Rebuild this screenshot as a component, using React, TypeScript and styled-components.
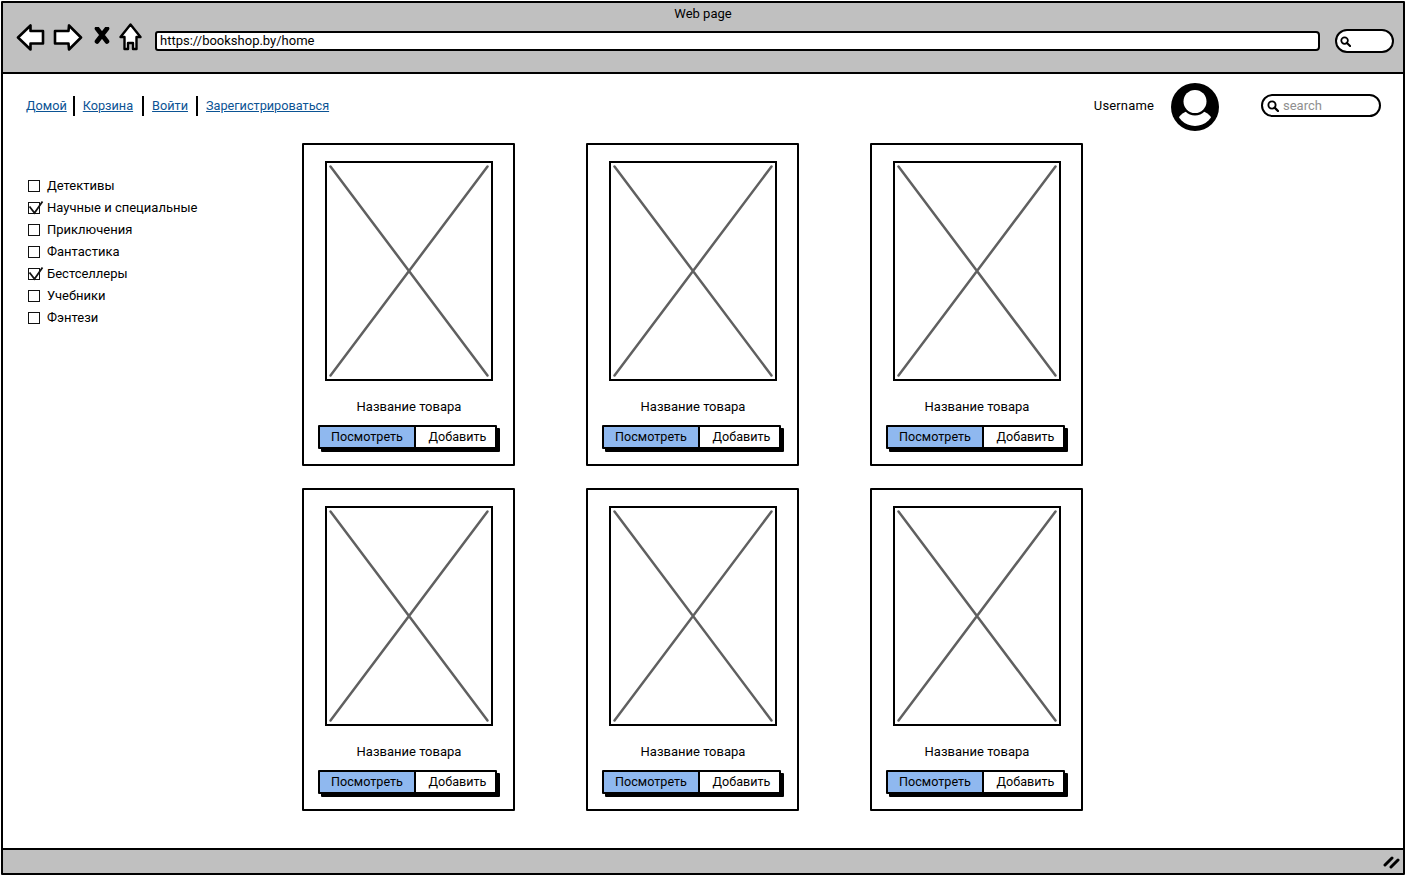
import React from "react";
import styled, { createGlobalStyle } from "styled-components";

const Global = createGlobalStyle`
  html, body { margin: 0; padding: 0; background: #fff; }
  body { font-family: "Roboto", "Noto Sans", sans-serif; font-size: 13px; color: #000; }
`;

const Page = styled.div`
  width: 1404px; height: 874px; margin: 1px 0 0 1px;
  border: 2px solid #000; box-sizing: border-box;
  display: flex; flex-direction: column; background: #fff;
  border-radius: 1px;
`;
const TitleBar = styled.header`
  height: 71px; flex: none; box-sizing: border-box;
  background: #c0c0c0; border-bottom: 2px solid #000;
  display: flex; flex-direction: column;
`;
const WindowTitle = styled.div`
  height: 22px; line-height: 22px; text-align: center; font-size: 13px;
`;
const Toolbar = styled.div`
  display: flex; align-items: center; height: 30px; padding-left: 13px;
`;
const NavIcon = styled.svg<{ $gap: number }>`
  flex: none; margin: 0 ${p => p.$gap}px 6px 0; display: block;
`;
const Address = styled.div`
  flex: none; width: 1165px; height: 20px; box-sizing: border-box; margin-top: 2px;
  background: #fff; border: 2px solid #000; border-radius: 3px 4px 4px 3px;
  padding-left: 3px; font-size: 13px; line-height: 16px; margin-right: 15px;
`;
const MiniSearch = styled.div`
  flex: none; width: 59px; height: 24px; box-sizing: border-box; margin-top: 2px;
  background: #fff; border: 2px solid #000; border-radius: 12px;
  display: flex; align-items: center; padding-left: 3px;
`;
const Content = styled.main`
  flex: 1; min-height: 0; display: flex; flex-direction: column;
`;
const TopNav = styled.nav`
  height: 69px; flex: none; box-sizing: border-box;
  display: flex; align-items: center; padding: 0 22px 6px 23px;
`;
const Links = styled.div`
  display: flex; align-items: center; margin-right: auto;
`;
const LinkItem = styled.a`
  color: #0b5394; text-decoration: underline; font-size: 12.7px; line-height: 20px;
`;
const Sep = styled.span<{ $before: number }>`
  width: 2px; height: 20px; background: #000; flex: none;
  margin: 0 8px 0 ${p => p.$before}px;
`;
const UserName = styled.span`
  font-size: 13px; margin-right: 17px; letter-spacing: 0.15px;
`;
const Avatar = styled.svg`
  display: block; flex: none; margin-right: 42px; margin-top: 2px;
`;
const SearchBox = styled.div`
  width: 120px; height: 23px; box-sizing: border-box;
  border: 2px solid #000; border-radius: 12px;
  display: flex; align-items: center; gap: 4px; padding-left: 4px;
  color: #8f8f8f; font-size: 13px; line-height: 18px;
`;
const Columns = styled.div`
  display: flex; flex: 1; min-height: 0;
`;
const Sidebar = styled.aside`
  width: 299px; flex: none; box-sizing: border-box; padding: 32px 0 0 25px;
`;
const CheckRow = styled.div`
  height: 22px; display: flex; align-items: center; gap: 7px; font-size: 13px;
`;
const CheckLabel = styled.span`
  margin-top: -2px;
`;
const Box = styled.span`
  width: 12px; height: 12px; flex: none; box-sizing: border-box;
  border: 1.5px solid #111; position: relative; display: block;
`;
const Tick = styled.svg`
  position: absolute; left: -1px; top: -4px; overflow: visible;
`;
const Grid = styled.section`
  display: grid; grid-template-columns: repeat(3, 213px);
  grid-auto-rows: 323px; column-gap: 71px; row-gap: 22px;
`;
const Card = styled.article`
  box-sizing: border-box; border: 2px solid #000; border-radius: 1px;
  display: flex; flex-direction: column; align-items: center; padding: 16px 0 0 1px;
`;
const Placeholder = styled.div`
  width: 168px; height: 220px; box-sizing: border-box; border: 2px solid #000; flex: none;
`;
const Cross = styled.svg`
  display: block; width: 100%; height: 100%;
`;
const ItemTitle = styled.div`
  margin-top: 16px; height: 20px; line-height: 20px; font-size: 13px;
`;
const BtnGroup = styled.div`
  margin: 8px 3px 0 0; display: flex; width: 179px; height: 24px;
  box-sizing: border-box; border: 2px solid #000; border-radius: 1px;
  box-shadow: 3px 3px 0 #000; background: #fff;
`;
const Btn = styled.div<{ $active?: boolean }>`
  display: flex; align-items: center; justify-content: center;
  font-size: 12.6px; line-height: 20px; box-sizing: border-box;
  width: ${p => (p.$active ? "96px" : "auto")};
  flex: ${p => (p.$active ? "none" : "1")};
  background: ${p => (p.$active ? "#8fb8ef" : "#fff")};
  border-right: ${p => (p.$active ? "2px solid #000" : "none")};
  padding-left: ${p => (p.$active ? "0" : "4px")};
`;
const Footer = styled.footer`
  height: 25px; flex: none; box-sizing: border-box; margin-top: auto;
  background: #c0c0c0; border-top: 2px solid #000;
  display: flex; align-items: center; justify-content: flex-end; padding-right: 2px;
`;

const Mag = ({ s = 12 }: { s?: number }) => (
  <svg width={s} height={s} viewBox="0 0 12 12" style={{ flex: "none", display: "block" }}>
    <circle cx="5" cy="5" r="3.6" fill="none" stroke="#000" strokeWidth="1.9" />
    <path d="M7.600 7.600 L11 11" stroke="#000" strokeWidth="2.300" strokeLinecap="round" />
  </svg>
);

const Check = ({ label, on }: { label: string; on?: boolean }) => (
  <CheckRow>
    <Box>
      {on && (
        <Tick width="16" height="16" viewBox="0 0 16 16">
          <path d="M1.500 7.500 L6.500 14 L14.500 2.500" fill="none" stroke="#111" strokeWidth="1.800" />
        </Tick>
      )}
    </Box>
    <CheckLabel>{label}</CheckLabel>
  </CheckRow>
);

const Product = () => (
  <Card>
    <Placeholder>
      <Cross viewBox="0 0 164 216">
        <path d="M3.500 3.500 L160.500 212.500 M160.500 3.500 L3.500 212.500" stroke="#606060" strokeWidth="2.500" strokeLinecap="round" />
      </Cross>
    </Placeholder>
    <ItemTitle>Название товара</ItemTitle>
    <BtnGroup>
      <Btn $active>Посмотреть</Btn>
      <Btn>Добавить</Btn>
    </BtnGroup>
  </Card>
);

const cats: [string, boolean][] = [
  ["Детективы", false], ["Научные и специальные", true], ["Приключения", false],
  ["Фантастика", false], ["Бестселлеры", true], ["Учебники", false], ["Фэнтези", false],
];

export default function App() {
  return (
    <Page>
      <Global />
      <TitleBar>
        <WindowTitle>Web page</WindowTitle>
        <Toolbar>
          <NavIcon $gap={8} width="29" height="27" viewBox="0 0 29 27">
            <path d="M2 13.500 L14.500 1.500 L14.500 7 L27 7 L27 19.500 L14.500 19.500 L14.500 25.500 Z" fill="#fff" stroke="#000" strokeWidth="2.600" strokeLinejoin="round" />
          </NavIcon>
          <NavIcon $gap={11} width="30" height="27" viewBox="0 0 30 27">
            <path d="M28 13.500 L16 1.500 L15.500 7 L2 7 L2 19.500 L15.500 19.500 L16 25.500 Z" fill="#fff" stroke="#000" strokeWidth="2.600" strokeLinejoin="round" />
          </NavIcon>
          <NavIcon $gap={9} width="16" height="20" viewBox="0 0 16 20">
            <path d="M3 1.500 L13 14.500 M13 1.500 L3 14.500" stroke="#000" strokeWidth="4.600" strokeLinecap="round" />
          </NavIcon>
          <NavIcon $gap={13} width="23" height="28" viewBox="0 0 23 28">
            <path d="M11.500 1.500 L21.500 14 L17.500 14 L17.500 26 L14 26 L14 20 L9 20 L9 26 L5.500 26 L5.500 14 L1.500 14 Z" fill="#fff" stroke="#000" strokeWidth="2.400" strokeLinejoin="round" />
          </NavIcon>
          <Address>https://bookshop.by/home</Address>
          <MiniSearch><Mag s={11} /></MiniSearch>
        </Toolbar>
      </TitleBar>
      <Content>
        <TopNav>
          <Links>
            <LinkItem>Домой</LinkItem><Sep $before={6} />
            <LinkItem>Корзина</LinkItem><Sep $before={9} />
            <LinkItem>Войти</LinkItem><Sep $before={8} />
            <LinkItem>Зарегистрироваться</LinkItem>
          </Links>
          <UserName>Username</UserName>
          <Avatar width="48" height="48" viewBox="0 0 48 48">
            <defs>
              <clipPath id="avatar-clip"><circle cx="24" cy="24" r="19" /></clipPath>
            </defs>
            <circle cx="24" cy="24" r="24" fill="#000" />
            <g clipPath="url(#avatar-clip)">
              <ellipse cx="24" cy="38" rx="17" ry="11" fill="#fff" />
            </g>
            <circle cx="24" cy="19" r="13.500" fill="#000" />
            <circle cx="24" cy="18.500" r="11.500" fill="#fff" />
          </Avatar>
          <SearchBox><Mag />search</SearchBox>
        </TopNav>
        <Columns>
          <Sidebar>
            {cats.map(([l, on]) => <Check key={l} label={l} on={on} />)}
          </Sidebar>
          <Grid>
            {Array.from({ length: 6 }, (_, i) => <Product key={i} />)}
          </Grid>
        </Columns>
      </Content>
      <Footer>
        <svg width="18" height="14" viewBox="0 0 18 14" style={{ display: "block" }}>
          <path d="M2 10 L9 3 M8 12 L15 5" stroke="#000" strokeWidth="3" strokeLinecap="round" />
        </svg>
      </Footer>
    </Page>
  );
}
